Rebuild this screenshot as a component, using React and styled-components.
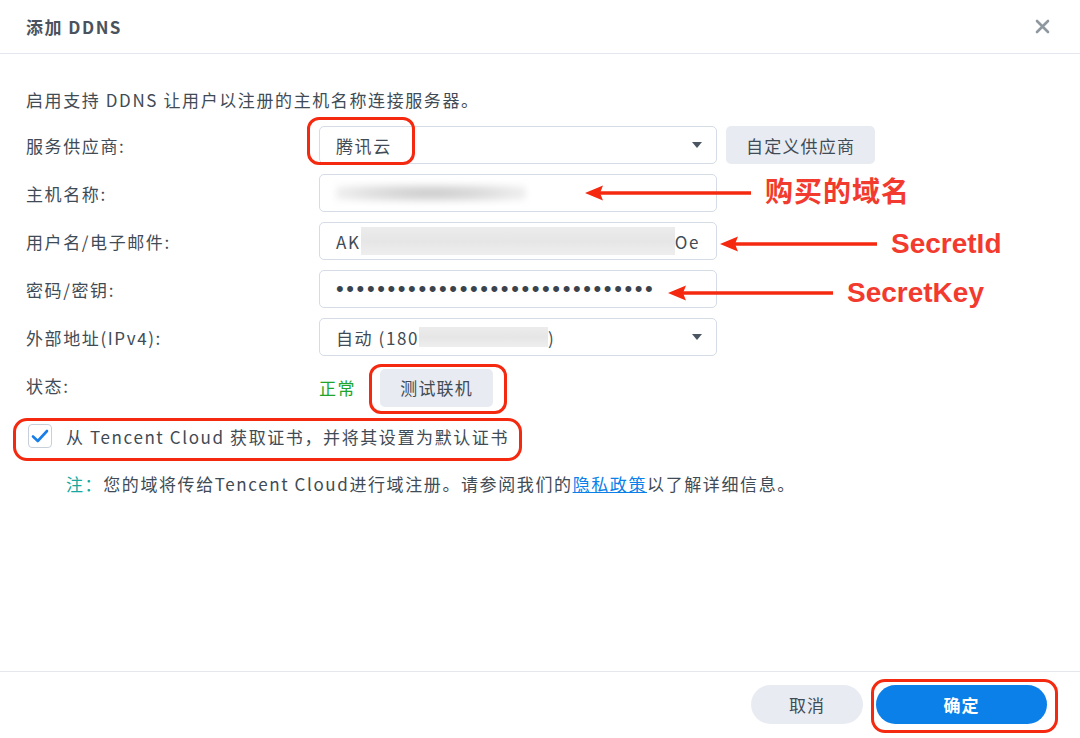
import React from 'react';
import styled, { createGlobalStyle } from 'styled-components';

const colors = {
    text: '#414b55',
    border: '#d5dce6',
    soft: '#e8ecf2',
    blue: '#0a80e8',
    red: '#f4290f',
    redText: '#f23b2e',
    green: '#20a52a',
    teal: '#16a9a1',
};

const GlobalStyle = createGlobalStyle`
    body {
        margin: 0;
        background: #fff;
        font-family: "Noto Sans CJK SC", "Noto Sans", sans-serif;
        color: ${colors.text};
    }
`

const Dialog = styled.div`
    position: relative;
    width: 1080px;
    height: 738px;
    display: flex;
    flex-direction: column;
    overflow: hidden;
    background: #fff;
`

const Header = styled.div`
    height: 53px;
    border-bottom: 1px solid #e4e8ee;
    display: flex;
    align-items: center;
    justify-content: space-between;
    padding: 0 30px 0 26px;
`

const Title = styled.div`
    font-size: 17px;
    font-weight: 700;
    letter-spacing: 1.5px;
    color: #4a535d;
`

const Body = styled.div`
    flex: 1;
    padding: 34px 26px 0 26px;
    font-size: 17px;
    letter-spacing: 1.6px;
`

const Desc = styled.div`
    line-height: 24px;
    margin-bottom: 14px;
`

const Form = styled.div`
    display: grid;
    grid-template-columns: 293px 398px auto;
    grid-auto-rows: 38px;
    row-gap: 10px;
    align-items: center;
`

const Label = styled.div`
    grid-column: 1;
`

const Field = styled.div`
    grid-column: 2;
    height: 38px;
    box-sizing: border-box;
    border: 1px solid ${colors.border};
    border-radius: 5px;
    display: flex;
    align-items: center;
    padding: 0 16px;
    position: relative;
    white-space: nowrap;
`

const Caret = styled.span`
    margin-left: auto;
    width: 0;
    height: 0;
    border-left: 5px solid transparent;
    border-right: 5px solid transparent;
    border-top: 6px solid #4a5561;
    margin-right: -2px;
`

const Blur = styled.span`
    display: inline-block;
    width: ${p => p.w}px;
    height: ${p => p.h}px;
    background: ${p => p.soft ? 'radial-gradient(ellipse at center, #c9c9c9 0%, #dedede 45%, #f4f4f4 80%, #fff 100%)' : 'linear-gradient(180deg, #ececec, #e6e6e6 50%, #eeeeee)'};
    filter: ${p => p.soft ? 'blur(3px)' : 'none'};
`

const Dots = styled.span`
    font-family: "Liberation Sans", sans-serif;
    font-size: 22px;
    letter-spacing: 2.6px;
    color: #3a434c;
`

const SoftButton = styled.button`
    height: 38px;
    border: none;
    border-radius: 5px;
    background: ${colors.soft};
    color: ${colors.text};
    font-family: inherit;
    font-size: 17px;
    letter-spacing: 1.2px;
    padding: 0 ${p => p.pad || 20}px;
    cursor: pointer;
`

const Aside = styled.div`
    grid-column: 3;
    padding-left: 9px;
`

const StatusCell = styled.div`
    grid-column: 2;
    display: flex;
    align-items: center;
    gap: 24px;
    margin-top: 5px;
`

const Ok = styled.span`
    color: ${colors.green};
`

const CheckRow = styled.label`
    display: flex;
    align-items: center;
    gap: 14px;
    margin: 20px 0 0 2px;
    height: 24px;
`

const Box = styled.span`
    width: 24px;
    height: 24px;
    box-sizing: border-box;
    border: 1px solid #c7cfd9;
    border-radius: 4px;
    display: flex;
    align-items: center;
    justify-content: center;
    background: #fff;
`

const Note = styled.div`
    margin: 25px 0 0 40px;
    line-height: 22px;
`

const NoteTag = styled.span`
    color: ${colors.teal};
`

const Link = styled.a`
    color: ${colors.blue};
    text-decoration: underline;
`

const Footer = styled.div`
    height: 65px;
    border-top: 1px solid #e4e8ee;
    display: flex;
    align-items: center;
    justify-content: flex-end;
    gap: 13px;
    padding: 0 33px 1px 0;
`

const PillButton = styled.button`
    height: 39px;
    width: ${p => p.w}px;
    border: none;
    border-radius: 20px;
    background: ${p => p.primary ? colors.blue : colors.soft};
    color: ${p => p.primary ? '#fff' : colors.text};
    font-family: inherit;
    font-size: 17px;
    font-weight: ${p => p.primary ? 700 : 400};
    letter-spacing: 1px;
    cursor: pointer;
`

/* annotation overlays drawn over the dialog */
const RedBox = styled.div`
    position: absolute;
    left: ${p => p.x}px;
    top: ${p => p.y}px;
    width: ${p => p.w}px;
    height: ${p => p.h}px;
    box-sizing: border-box;
    border: 3px solid ${colors.red};
    border-radius: ${p => p.r || 12}px;
    pointer-events: none;
`

const Callout = styled.div`
    position: absolute;
    left: ${p => p.x}px;
    top: ${p => p.y}px;
    display: flex;
    align-items: center;
    gap: 14px;
    pointer-events: none;
`

const CalloutText = styled.span`
    color: ${colors.redText};
    font-family: "Liberation Sans", "Noto Sans CJK SC", sans-serif;
    font-weight: 700;
    font-size: 28px;
    line-height: 32px;
    letter-spacing: ${p => p.cjk ? '1px' : '0'};
`

const Arrow = ({ len }) => (
    <svg width={len} height="18" viewBox={`0 0 ${len} 18`}>
        <line x1="14" y1="9" x2={len} y2="9" stroke={colors.red} strokeWidth="3.5" />
        <path d="M0 9 L18 1.5 L15 9 L18 16.5 Z" fill={colors.red} />
    </svg>
);

const CloseIcon = () => (
    <svg width="15" height="15" viewBox="0 0 15 15">
        <path d="M2 2 L13 13 M13 2 L2 13" stroke="#8f979f" strokeWidth="2.6" strokeLinecap="round" />
    </svg>
);

const CheckIcon = () => (
    <svg width="18" height="14" viewBox="0 0 18 14">
        <path d="M2 7.5 L6.8 12 L16 2" fill="none" stroke="#1a7ee8" strokeWidth="2.6" strokeLinecap="round" strokeLinejoin="round" />
    </svg>
);

const App = () => {
    return (
        <Dialog>
            <GlobalStyle />
            <Header>
                <Title>添加 DDNS</Title>
                <CloseIcon />
            </Header>

            <Body>
                <Desc>启用支持 DDNS 让用户以注册的主机名称连接服务器。</Desc>
                <Form>
                    <Label>服务供应商:</Label>
                    <Field>腾讯云<Caret /></Field>
                    <Aside><SoftButton>自定义供应商</SoftButton></Aside>

                    <Label>主机名称:</Label>
                    <Field><Blur soft w={190} h={18} /></Field>

                    <Label>用户名/电子邮件:</Label>
                    <Field>AK<Blur w={318} h={28} />Oe</Field>

                    <Label>密码/密钥:</Label>
                    <Field><Dots>•••••••••••••••••••••••••••••••</Dots></Field>

                    <Label>外部地址(IPv4):</Label>
                    <Field>自动 (180<Blur w={129} h={20} />)<Caret /></Field>

                    <Label>状态:</Label>
                    <StatusCell>
                        <Ok>正常</Ok>
                        <SoftButton pad={20}>测试联机</SoftButton>
                    </StatusCell>
                </Form>

                <CheckRow>
                    <Box><CheckIcon /></Box>
                    从 Tencent Cloud 获取证书，并将其设置为默认证书
                </CheckRow>

                <Note>
                    <NoteTag>注：</NoteTag>您的域将传给Tencent Cloud进行域注册。请参阅我们的<Link>隐私政策</Link>以了解详细信息。
                </Note>
            </Body>

            <Footer>
                <PillButton w={112}>取消</PillButton>
                <PillButton primary w={171}>确定</PillButton>
            </Footer>

            <RedBox x={307} y={117} w={108} h={48} />
            <RedBox x={369} y={364} w={138} h={50} />
            <RedBox x={13} y={418} w={509} h={43} r={14} />
            <RedBox x={871} y={679} w={187} h={54} r={14} />

            <Callout x={585} y={177}>
                <Arrow len={166} />
                <CalloutText cjk>购买的域名</CalloutText>
            </Callout>
            <Callout x={720} y={228}>
                <Arrow len={157} />
                <CalloutText>SecretId</CalloutText>
            </Callout>
            <Callout x={668} y={277}>
                <Arrow len={165} />
                <CalloutText>SecretKey</CalloutText>
            </Callout>
        </Dialog>
    );
};

export default App;
